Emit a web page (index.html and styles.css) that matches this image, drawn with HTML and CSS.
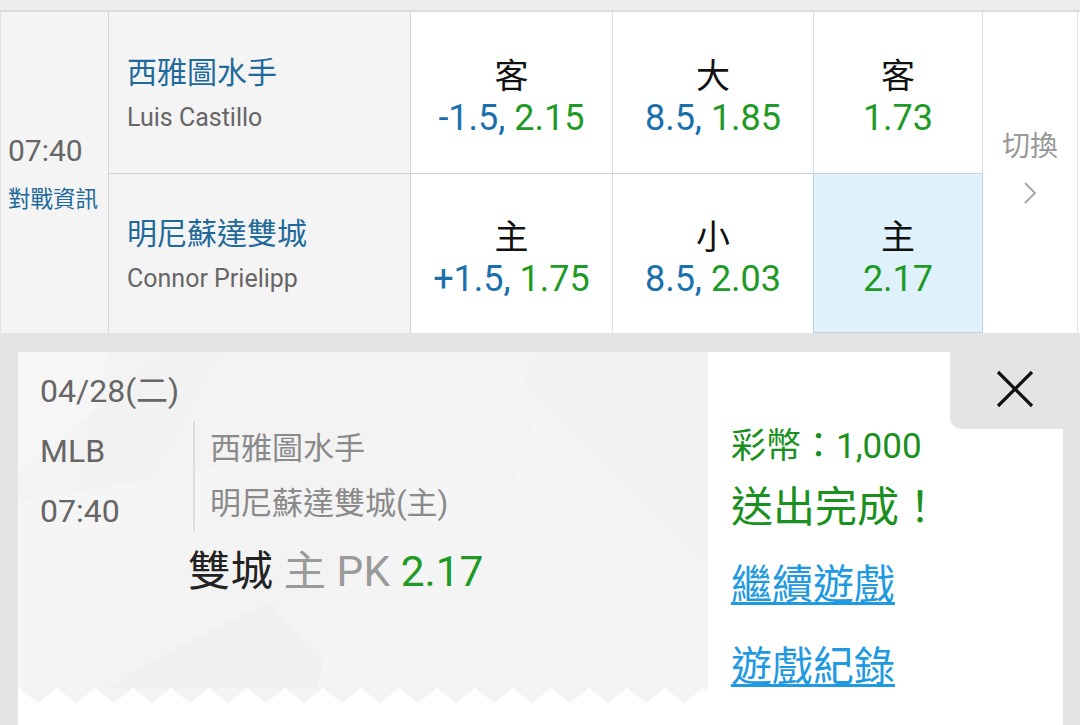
FILE: index.html
```html
<!DOCTYPE html>
<html lang="zh-Hant">
<head>
<meta charset="utf-8">
<title>MLB</title>
<link rel="stylesheet" href="styles.css">
</head>
<body>
<div class="page">
  <div class="topbar"></div>
  <div class="match">
    <div class="time-col">
      <div class="time">07:40</div>
      <div class="info">對戰資訊</div>
    </div>

    <div class="team r1">
      <div class="team-name">西雅圖水手</div>
      <div class="pitcher">Luis Castillo</div>
    </div>
    <div class="odds r1">
      <div class="lab">客</div>
      <div class="val"><span class="blue">-1.5,</span> <span class="green">2.15</span></div>
    </div>
    <div class="odds r1">
      <div class="lab">大</div>
      <div class="val"><span class="blue">8.5,</span> <span class="green">1.85</span></div>
    </div>
    <div class="odds r1">
      <div class="lab">客</div>
      <div class="val"><span class="green">1.73</span></div>
    </div>

    <div class="switch">
      <div class="switch-label">切換</div>
      <svg class="chev" width="14" height="24" viewBox="0 0 14 24"><polyline points="2,2 12,12 2,22" fill="none" stroke="#aaaaaa" stroke-width="2"/></svg>
    </div>

    <div class="team">
      <div class="team-name">明尼蘇達雙城</div>
      <div class="pitcher">Connor Prielipp</div>
    </div>
    <div class="odds">
      <div class="lab">主</div>
      <div class="val"><span class="blue">+1.5,</span> <span class="green">1.75</span></div>
    </div>
    <div class="odds">
      <div class="lab">小</div>
      <div class="val"><span class="blue">8.5,</span> <span class="green">2.03</span></div>
    </div>
    <div class="odds sel">
      <div class="lab">主</div>
      <div class="val"><span class="green">2.17</span></div>
    </div>
  </div>

  <div class="bet">
    <div class="ticket">
      <div class="ticket-body">
        <svg class="facets" viewBox="0 0 690 336" preserveAspectRatio="none" aria-hidden="true">
          <polygon points="0,0 150,0 0,120" fill="#f6f6f6"/>
          <polygon points="90,0 200,0 20,330" fill="#f1f1f1" opacity="0.6"/>
          <polygon points="0,150 230,110 60,336 0,336" fill="#f5f5f5"/>
          <polygon points="300,0 520,0 420,200" fill="#f5f5f5"/>
          <polygon points="480,0 690,0 690,210" fill="#f1f1f1" opacity="0.6"/>
          <polygon points="520,60 690,230 560,336 430,336" fill="#f5f5f5"/>
          <polygon points="150,300 250,250 330,336 90,336" fill="#efefef" opacity="0.6"/>
          <polygon points="330,180 520,160 460,336 300,336" fill="#f4f4f4"/>
        </svg>
        <div class="ticket-content">
          <div class="date">04/28(二)</div>
          <div class="meta">
            <div class="meta-left">
              <div>MLB</div>
              <div>07:40</div>
            </div>
            <div class="meta-teams">
              <div>西雅圖水手</div>
              <div>明尼蘇達雙城(主)</div>
            </div>
          </div>
          <div class="pick"><span class="pick-team">雙城</span> <span class="pick-type">主 PK</span> <span class="green">2.17</span></div>
        </div>
      </div>
      <div class="zigzag"></div>
    </div>

    <div class="result">
      <div class="close-row">
        <div class="close">
          <svg width="38" height="38" viewBox="0 0 38 38"><path d="M2 2 L36 36 M36 2 L2 36" stroke="#111" stroke-width="3.2" fill="none"/></svg>
        </div>
      </div>
      <div class="coins">彩幣：1,000</div>
      <div class="done">送出完成！</div>
      <a class="link link-first" href="#">繼續遊戲</a>
      <a class="link link-second" href="#">遊戲紀錄</a>
    </div>
  </div>
</div>
</body>
</html>
```

FILE: styles.css
```css
* { box-sizing: border-box; }
html, body { margin: 0; padding: 0; }
body {
  width: 1080px;
  height: 725px;
  overflow: hidden;
  background: #e4e4e4;
  font-family: Roboto, "Noto Sans CJK TC", sans-serif;
}
.page { width: 1080px; height: 725px; }

.topbar {
  height: 12px;
  background: #ededed;
  border-bottom: 2px solid #dcdcdc;
}

.match {
  display: grid;
  grid-template-columns: 109px 302px 202px 201px 169px 1fr;
  grid-template-rows: 162px 159px;
  background: #fff;
}

.time-col {
  grid-row: 1 / 3;
  background: #f4f4f4;
  border-right: 1px solid #d6d6d6;
  border-left: 1px solid #e2e2e2;
  display: flex;
  flex-direction: column;
  justify-content: center;
  padding: 5px 0 0 7px;
  gap: 8px;
}
.time { font-size: 30px; line-height: 40px; color: #666; }
.info { font-size: 22.5px; line-height: 40px; color: #1f6a9a; }

.team {
  background: #f4f4f4;
  border-right: 1px solid #d6d6d6;
  display: flex;
  flex-direction: column;
  justify-content: center;
  padding: 8px 0 0 18px;
}
.team-name { font-size: 30px; line-height: 38px; color: #1f6a9a; }
.pitcher { font-size: 25px; line-height: 44px; color: #666; margin-top: 4px; }

.r1 { border-bottom: 1px solid #c6d6de; }

.odds {
  border-right: 1px solid #dcdcdc;
  display: flex;
  flex-direction: column;
  align-items: center;
  justify-content: center;
  padding-top: 11px;
  text-align: center;
}
.lab { font-size: 34px; line-height: 40px; color: #111; }
.val { font-size: 36px; line-height: 44px; }
.blue { color: #1a70ab; }
.green { color: #1f9a27; }

.sel {
  background: #dff2fb;
  border-right-color: #b7d3e2;
  box-shadow: inset 0 -1px 0 #b7d3e2, -1px 0 0 #b7d3e2;
}

.switch {
  grid-row: 1 / 3;
  grid-column: 6;
  display: flex;
  flex-direction: column;
  align-items: center;
  justify-content: center;
  gap: 16px;
  padding-bottom: 12px;
  border-right: 1px solid #e2e2e2;
  margin-right: 2px;
}
.switch-label { font-size: 28px; line-height: 36px; color: #999; }
.chev { display: block; }

.bet {
  display: flex;
  height: 392px;
  padding: 19px 17px 0 18px;
}

.ticket {
  width: 690px;
  flex: 0 0 690px;
  background: #fff;
  display: flex;
  flex-direction: column;
}
.ticket-body {
  position: relative;
  height: 336px;
  background: #f3f3f3;
  overflow: hidden;
}
.facets {
  position: absolute;
  left: 0;
  top: 0;
  width: 100%;
  height: 100%;
}
.ticket-content {
  position: relative;
  padding: 15px 0 0 22px;
}
.date { font-size: 32px; line-height: 48px; color: #666; }
.meta { display: flex; margin-top: 6px; }
.meta-left {
  width: 153px;
  font-size: 32px;
  line-height: 60px;
  color: #666;
}
.meta-teams {
  border-left: 2px solid #dedede;
  padding-left: 15px;
  font-size: 31px;
  line-height: 55px;
  color: #8a8a8a;
  align-self: flex-start;
}
.pick {
  margin: 5px 0 0 148px;
  font-size: 42.5px;
  line-height: 52px;
}
.pick-team { color: #222; }
.pick-type { color: #9a9a9a; }

.zigzag {
  height: 15px;
  background: conic-gradient(from 128.3deg at 50% 0, #ffffff 0deg 103.4deg, #f3f3f3 103.4deg 360deg) 20px 0 / 38px 15px repeat-x;
}

.result {
  flex: 1;
  background: #fff;
  display: flex;
  flex-direction: column;
  align-items: flex-start;
  padding-left: 23px;
}
.close-row {
  align-self: stretch;
  display: flex;
  justify-content: flex-end;
}
.close {
  width: 113px;
  height: 77px;
  background: #e4e4e4;
  border-bottom-left-radius: 12px;
  display: flex;
  align-items: center;
  justify-content: flex-end;
  padding-right: 29px;
  padding-bottom: 4px;
}
.close svg { display: block; }
.coins {
  margin-top: -1px;
  font-size: 35px;
  line-height: 38px;
  color: #1a9020;
}
.done {
  margin-top: 16px;
  font-size: 42px;
  line-height: 52px;
  color: #1a9020;
}
.link {
  display: block;
  font-size: 41px;
  line-height: 56px;
  color: #1f9ae0;
  text-decoration: underline;
  text-decoration-thickness: 3px;
  text-underline-offset: 3px;
}
.link-first { margin-top: 23px; }
.link-second { margin-top: 26px; }
```
